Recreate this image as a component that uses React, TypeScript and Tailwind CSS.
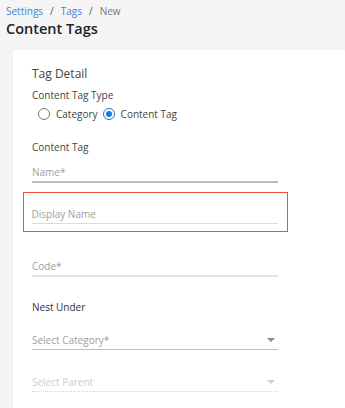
import React from "react";

function Field({ label, className = "", line = "border-b border-[#dcdcdc]", color = "text-[#9e9e9e]", arrow = false }: { label: string; className?: string; line?: string; color?: string; arrow?: boolean }) {
  return (
    <div className={`w-[246px] flex items-center justify-between pb-[1px] ${line} ${className}`}>
      <span className={`text-[10px] leading-[16px] ${color}`}>{label}</span>
      {arrow && (
        <svg width="8" height="4" viewBox="0 0 8 4" className="mr-[3px]">
          <path d="M0 0 L8 0 L4 4 Z" fill={color.includes("ccc") ? "#cfcfcf" : "#8a8a8a"} />
        </svg>
      )}
    </div>
  );
}

export default function App() {
  return (
    <div className="w-[345px] h-[408px] overflow-hidden bg-[#f5f5f5] font-['Open_Sans',sans-serif]">
      <div className="pl-[6px] pt-[3px] text-[10px] leading-[16px] flex items-center">
        <span className="text-[#3a86d6]">Settings</span>
        <span className="mx-[7px] text-[#555]">/</span>
        <span className="text-[#3a86d6]">Tags</span>
        <span className="mx-[7px] text-[#555]">/</span>
        <span className="text-[#777]">New</span>
      </div>
      <div className="pl-[6px] text-[14.5px] leading-[20px] font-semibold text-[#222]">Content Tags</div>
      <div className="ml-[13px] mt-[11px] bg-white h-[400px] pl-[19px] pt-[14px] shadow-[0_0_2px_rgba(0,0,0,0.06)]">
        <div className="text-[12px] leading-[20px] text-[#444]">Tag Detail</div>
        <div className="mt-[3px] text-[10px] leading-[16px] text-[#444]">Content Tag Type</div>
        <div className="mt-[3px] ml-[6px] flex items-center text-[10px] leading-[16px] text-[#444]">
          <span className="w-[12px] h-[12px] rounded-full border-[1.5px] border-[#777]" />
          <span className="ml-[6px]">Category</span>
          <span className="ml-[5px] w-[12px] h-[12px] rounded-full border-[1.5px] border-[#1e78d7] flex items-center justify-center">
            <span className="w-[6px] h-[6px] rounded-full bg-[#1e78d7]" />
          </span>
          <span className="ml-[6px]">Content Tag</span>
        </div>
        <div className="mt-[17px] text-[10px] leading-[16px] text-[#444]">Content Tag</div>
        <Field label="Name*" className="mt-[9px]" line="border-b-[2px] border-[#bdbdbd]" />
        <div className="-ml-[9px] mt-[9px] w-[265px] border-[1.5px] border-[#f44a36] pl-[7.5px] pt-[13px] pb-[7px]">
          <Field label="Display Name" />
        </div>
        <Field label="Code*" className="mt-[26px]" line="border-b-[2px] border-[#e3e3e3]" />
        <div className="mt-[22px] text-[10px] leading-[16px] text-[#333]">Nest Under</div>
        <Field label="Select Category*" className="mt-[17px]" line="border-b border-[#bdbdbd]" arrow />
        <Field label="Select Parent" className="mt-[24px]" line="border-b border-dotted border-[#d5d5d5]" color="text-[#cccccc]" arrow />
      </div>
    </div>
  );
}
